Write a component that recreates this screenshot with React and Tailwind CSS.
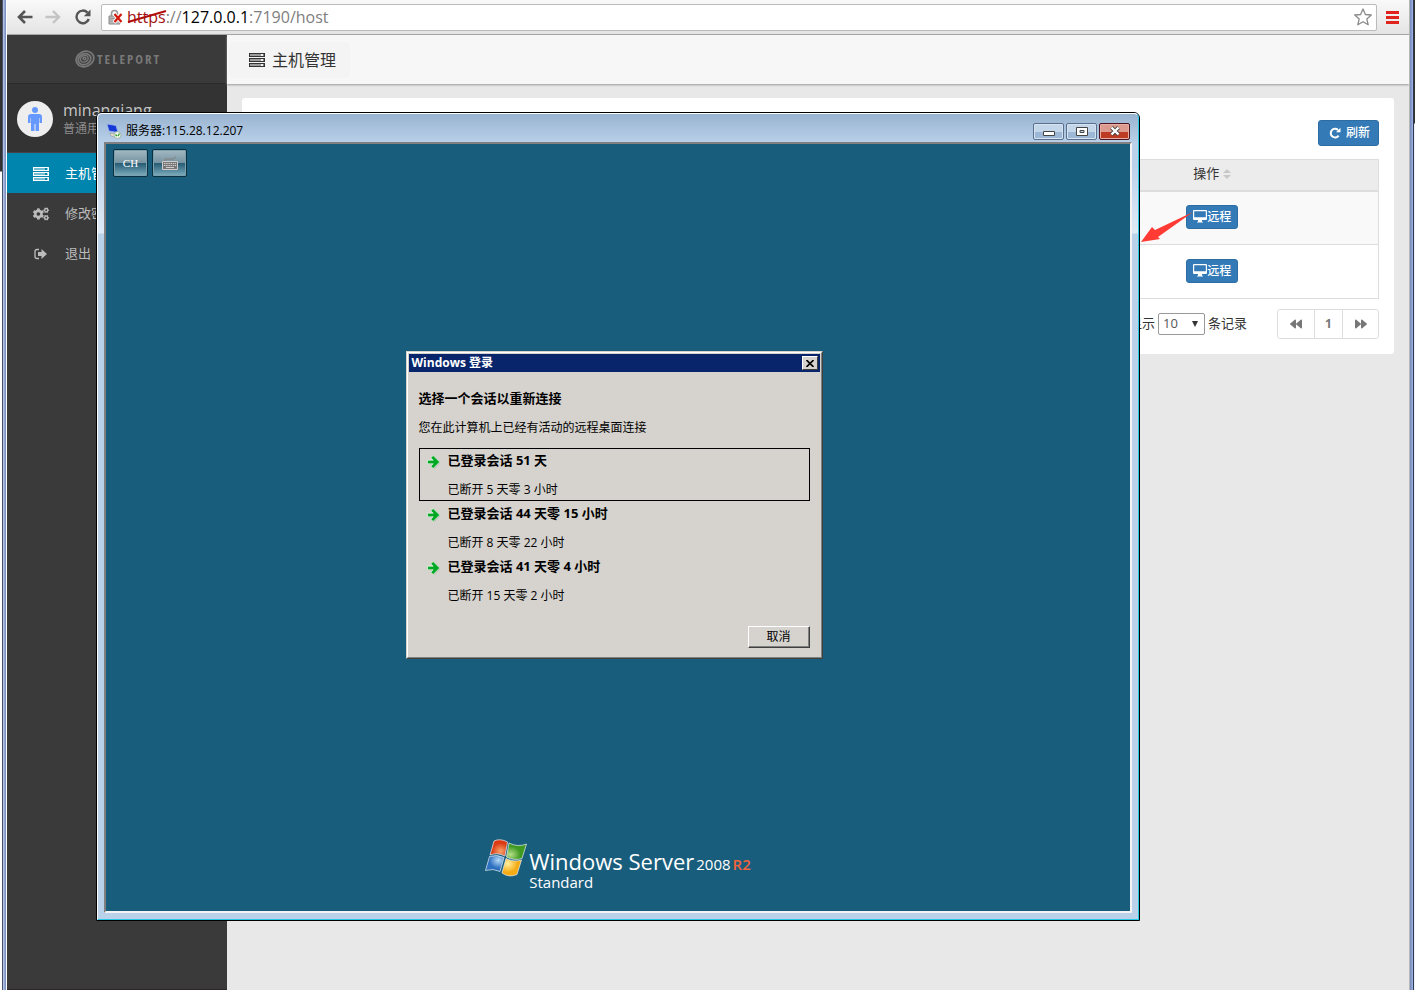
import { useState } from "react";
import { FaBackward, FaCogs, FaForward } from "react-icons/fa";

const menu = [
  { id: "host", name: "主机管理", Icon: ServerIcon },
  { id: "pwd", name: "修改密码", Icon: FaCogs },
  { id: "exit", name: "退出", Icon: ExitIcon },
];

const sessions = [
  { id: 1, title: "已登录会话 51 天", detail: "已断开 5 天零 3 小时" },
  { id: 2, title: "已登录会话 44 天零 15 小时", detail: "已断开 8 天零 22 小时" },
  { id: 3, title: "已登录会话 41 天零 4 小时", detail: "已断开 15 天零 2 小时" },
];

function ServerIcon({ className }) {
  return (
    <svg viewBox="0 0 16 14" className={className} fill="currentColor">
      {[0, 5, 10].map((y) => (
        <g key={y} transform={`translate(0 ${y})`}>
          <path fillRule="evenodd" d="M0 0h16v4H0zM1 1v2h14V1z" />
          <path d="M1 1h11v2H1z" opacity=".45" />
          <path d="M14 1h1v2h-1z" opacity=".6" />
        </g>
      ))}
    </svg>
  );
}

function ExitIcon({ className }) {
  return (
    <svg viewBox="0 0 16 14" className={className}>
      <path d="M6 2.500H4Q2 2.500 2 4.500v5q0 2 2 2h2" fill="none" stroke="currentColor" strokeWidth="1.3" />
      <path d="M8.500 2l5.500 5-5.500 5V9H5V5h3.500z" fill="currentColor" />
    </svg>
  );
}

function PersonIcon() {
  return (
    <svg viewBox="0 0 14 24" className="h-6 w-3.5" fill="currentColor">
      <circle cx="7" cy="3" r="3" />
      <path d="M3 7h8q3 0 3 3v6h-2.500v-5H11v13H7.500v-7h-1v7H3V11h-.5v5H0v-6q0-3 3-3z" />
    </svg>
  );
}

function DesktopIcon() {
  return (
    <svg viewBox="0 0 14 13" className="h-[13px] w-3.5" fill="currentColor">
      <path fillRule="evenodd" d="M1 0h12q1 0 1 1v8q0 1-1 1H9v1.500l1 .5v.5H4V12l1-.5V10H1q-1 0-1-1V1q0-1 1-1zM1.200 1.200v6h11.600v-6z" />
    </svg>
  );
}

function RefreshIcon() {
  return (
    <svg viewBox="0 0 12 12" className="h-3 w-3">
      <path d="M9.600 8.600A4.300 4.300 0 1 1 9 3" fill="none" stroke="currentColor" strokeWidth="2" />
      <path d="M11.500.7v4.600H7z" fill="currentColor" />
    </svg>
  );
}

function BrowserBar() {
  return (
    <div className="flex h-[35px] items-center border-b border-[#a5a5a5] bg-linear-to-b from-[#f9f9f9] to-[#e4e4e4] px-2.5">
      <button aria-label="back" className="text-[#555]">
        <svg viewBox="0 0 16 14" className="h-3.5 w-4" fill="none" stroke="currentColor" strokeWidth="2.6">
          <path d="M15.500 7H2M8 1L2 7l6 6" />
        </svg>
      </button>
      <button aria-label="forward" className="ml-3 text-[#c4c4c4]">
        <svg viewBox="0 0 16 14" className="h-3.5 w-4" fill="none" stroke="currentColor" strokeWidth="2.4">
          <path d="M.5 7H14M8 1l6 6-6 6" />
        </svg>
      </button>
      <button aria-label="reload" className="ml-3.5 text-[#555]">
        <svg viewBox="0 0 16 16" className="h-4 w-4">
          <path d="M13.800 10A6.300 6.300 0 1 1 12.500 3.600" fill="none" stroke="currentColor" strokeWidth="2.4" />
          <path d="M15.500.5v6.700H8.800z" fill="currentColor" />
        </svg>
      </button>
      <div className="ml-2.5 flex h-[27px] flex-1 items-center rounded-xs border border-[#bbb] bg-white pr-1 pl-1.5">
        <svg viewBox="0 0 16 16" className="h-4 w-4">
          <path d="M3.500 8V4.500a3 3 0 0 1 6 0V8" fill="none" stroke="#999" strokeWidth="1.6" />
          <path d="M1 7h11v8H1z" fill="#bbb" stroke="#888" />
          <path d="M2 9.500h9M2 12h9" stroke="#999" />
          <path d="M6 4.500l8 9M14 4.500l-8 9" stroke="#fff" strokeWidth="4" />
          <path d="M6.500 5l7 8M13.500 5l-7 8" stroke="#d4170c" strokeWidth="2.2" />
        </svg>
        <div className="ml-[3px] text-base leading-6 text-[#808080]">
          <span className="relative text-[#a01212]">
            https
            <svg viewBox="0 0 40 14" className="absolute top-1 left-0 h-3.5 w-10">
              <path d="M1 12L39 1" stroke="#b00d0d" strokeWidth="2" />
            </svg>
          </span>
          ://<span className="text-black">127.0.0.1</span>:7190/host
        </div>
        <svg viewBox="0 0 18 18" className="ml-auto h-[18px] w-[18px]" fill="none" stroke="#8a8a8a" strokeWidth="1.3">
          <path d="M9 1l2.400 5.500 5.900.5-4.500 3.900 1.400 5.900L9 13.700l-5.200 3.100 1.400-5.900L.7 7l5.900-.5z" strokeLinejoin="round" />
        </svg>
      </div>
      <button aria-label="menu" className="ml-[9px] flex w-[13px] flex-col gap-0.5">
        <span className="h-[3px] w-full bg-[#e0231d]" />
        <span className="h-[3px] w-full bg-[#e0231d]" />
        <span className="h-[3px] w-full bg-[#e0231d]" />
      </button>
    </div>
  );
}

function Sidebar() {
  return (
    <aside className="w-[220px] shrink-0 border-b border-[#2b2526] bg-[#3a3a3a]">
      <div className="flex h-[49px] items-center justify-center gap-0.5 border-b border-[#2b2b2b] text-[#787878]">
        <svg viewBox="0 0 20 18" className="h-[18px] w-5" fill="none" stroke="currentColor">
          <ellipse cx="10" cy="9" rx="9" ry="7.500" transform="rotate(-25 10 9)" strokeWidth="1.800" />
          <ellipse cx="9.500" cy="9" rx="6.500" ry="5.300" transform="rotate(-25 10 9)" strokeWidth="1.800" />
          <ellipse cx="9.500" cy="8.500" rx="4" ry="3.200" transform="rotate(-25 10 9)" strokeWidth="1.500" />
          <ellipse cx="9.500" cy="8.500" rx="1.500" ry="1.200" strokeWidth="1.500" />
        </svg>
        <span className="flex gap-0.5 font-['Open_Sans_Condensed','Open_Sans',sans-serif] text-[13px] leading-5 font-light">
          {"TELEPORT".split("").map((c, i) => (
            <span key={i}>{c}</span>
          ))}
        </span>
      </div>
      <div className="flex h-[68px] items-center gap-2.5 bg-[#333] pt-0.5 pl-2.5">
        <div className="flex h-9 w-9 items-center justify-center rounded-full bg-[#eee] text-[#6699ff]">
          <PersonIcon />
        </div>
        <div>
          <p className="text-base leading-5 text-[#c6c6c6]">minanqiang</p>
          <p className="text-xs leading-[18px] text-[#8c8c8c]">普通用户</p>
        </div>
      </div>
      <nav className="border-t border-[#474040]">
        {menu.map(({ id, name, Icon }) => (
          <a
            key={id}
            href="#"
            className={`flex h-10 items-center gap-4 pt-0.5 pl-[26px] text-[13px] ${
              id === "host" ? "bg-[#0086ae] text-white" : "text-[#bcbcbc]"
            }`}
          >
            <Icon className="h-4 w-4" />
            {name}
          </a>
        ))}
      </nav>
    </aside>
  );
}

function HostCard() {
  const [size, setSize] = useState("10");

  return (
    <section className="mx-[15px] mt-[14px] rounded-[3px] bg-white px-[15px] pt-[22px] pb-[15px]">
      <div className="flex justify-end">
        <button className="flex h-[26px] items-center gap-[5px] rounded-[3px] border border-[#2e6da4] bg-[#337ab7] px-2 pl-2.5 text-xs font-medium text-white">
          <RefreshIcon />
          刷新
        </button>
      </div>
      <table className="mt-[13px] w-full border-collapse border border-[#ddd] text-[13px] text-[#333]">
        <thead>
          <tr className="h-[31px] border-b-2 border-[#ddd] bg-[#ececec]">
            <th />
            <th className="w-[332px] pb-0.5 font-normal">
              <span className="flex items-center justify-center gap-1">
                操作
                <svg viewBox="0 0 8 10" className="h-2.5 w-2" fill="#c8c8c8">
                  <path d="M4 0l4 4H0zM4 10l4-4H0z" />
                </svg>
              </span>
            </th>
          </tr>
        </thead>
        <tbody>
          {[1, 2].map((n) => (
            <tr key={n} className="h-[54px] border-b border-[#ddd] odd:bg-[#f9f9f9]">
              <td />
              <td className="pb-0.5 text-center">
                <button className="inline-flex h-6 items-center rounded-[3px] border border-[#2e6da4] bg-[#337ab7] px-1.5 align-middle text-xs font-medium text-white">
                  <DesktopIcon />
                  远程
                </button>
              </td>
            </tr>
          ))}
        </tbody>
      </table>
      <div className="mt-2.5 flex items-center justify-end text-[13px] text-[#333]">
        <label htmlFor="size">每页显示</label>
        <span className="relative mx-[3px]">
          <select
            id="size"
            value={size}
            onChange={(e) => setSize(e.target.value)}
            className="block h-[22px] w-[47px] appearance-none rounded-xs border border-[#999] bg-white pl-1 text-[#555]"
          >
            <option>10</option>
            <option>25</option>
          </select>
          <svg viewBox="0 0 6 6" className="pointer-events-none absolute top-2 right-[7px] h-1.5 w-1.5">
            <path d="M0 0h6L3 6z" fill="#333" />
          </svg>
        </span>
        <label htmlFor="size">条记录</label>
        <div className="ml-[30px] flex h-[30px] divide-x divide-[#ddd] rounded-[3px] border border-[#ddd] text-xs font-bold text-[#777]">
          <button aria-label="first" className="flex w-[37px] items-center justify-center">
            <FaBackward className="h-3 w-3" />
          </button>
          <button className="w-7">1</button>
          <button aria-label="last" className="flex w-[35px] items-center justify-center">
            <FaForward className="h-3 w-3" />
          </button>
        </div>
      </div>
    </section>
  );
}

function LoginDialog() {
  return (
    <div className="w-[417px] border border-t-[#d6d3ce] border-r-[#404040] border-b-[#404040] border-l-[#d6d3ce] bg-[#d6d3ce] text-black">
      <div className="border border-t-white border-r-[#808080] border-b-[#808080] border-l-white p-px pb-[9px]">
        <div className="flex h-[18px] items-center justify-between bg-[#08246b] pr-0.5 pl-[3px] text-xs font-bold text-white">
          Windows 登录
          <button
            aria-label="close"
            className="flex h-3.5 w-4 items-center justify-center border border-t-white border-r-[#404040] border-b-[#404040] border-l-white bg-[#d6d3ce]"
          >
            <svg viewBox="0 0 8 7" className="h-[7px] w-2" stroke="#000" strokeWidth="1.600">
              <path d="M.5 0l7 7M7.500 0l-7 7" />
            </svg>
          </button>
        </div>
        <div className="px-2.5 pt-4">
          <h2 className="text-[13px] leading-5 font-bold">选择一个会话以重新连接</h2>
          <p className="mt-2.5 text-xs leading-5">您在此计算机上已经有活动的远程桌面连接</p>
          <ul className="mt-2.5">
            {sessions.map((s, i) => (
              <li
                key={s.id}
                className={`flex h-[53px] gap-[7px] border pl-[7px] ${i === 0 ? "border-black" : "border-transparent"}`}
              >
                <svg viewBox="0 0 14 14" className="mt-1.5 h-3.5 w-3.5">
                  <path d="M1.500 6h6L5 3.200l2.600-2L13.500 7.500l-6 6.300L5 11.800 7.500 9.500h-6z" fill="#a8a5a0" opacity=".6" />
                  <path d="M.5 5.200h5.700L3.800 2.700 6.200.6 12.700 7l-6.500 6.400-2.400-2.100 2.400-2.500H.5z" fill="#00a823" stroke="#e9fbe9" strokeWidth=".7" />
                </svg>
                <div>
                  <p className="mt-px text-[13px] leading-5 font-bold">{s.title}</p>
                  <p className="mt-2.5 text-xs leading-5">{s.detail}</p>
                </div>
              </li>
            ))}
          </ul>
          <div className="mt-[19px] flex justify-end">
            <button className="h-[22px] w-[62px] border border-t-white border-r-[#404040] border-b-[#404040] border-l-white text-xs shadow-[inset_-1px_-1px_#808080]">
              取消
            </button>
          </div>
        </div>
      </div>
    </div>
  );
}

function ServerLogo() {
  return (
    <div className="flex items-start text-white">
      <svg viewBox="0 0 42 38" className="h-[38px] w-[42px]">
        <defs>
          <radialGradient id="red" cx=".6" cy=".7"><stop offset="0" stopColor="#f8a36a" /><stop offset="1" stopColor="#dc3a12" /></radialGradient>
          <radialGradient id="green" cx=".2" cy=".7"><stop offset="0" stopColor="#b8e08a" /><stop offset="1" stopColor="#3f9a22" /></radialGradient>
          <radialGradient id="blue" cx=".7" cy=".3"><stop offset="0" stopColor="#b5dbf7" /><stop offset="1" stopColor="#2d6fc0" /></radialGradient>
          <radialGradient id="yellow" cx=".3" cy=".3"><stop offset="0" stopColor="#fff0a0" /><stop offset="1" stopColor="#f5ab13" /></radialGradient>
        </defs>
        <g stroke="#e8eef2" strokeWidth=".7">
          <path d="M9 2Q15-1 22.500 3L20 17Q12 13 5 16z" fill="url(#red)" />
          <path d="M24 4Q33 8.500 41.500 5L37 19.500Q29 22 21.500 18z" fill="url(#green)" />
          <path d="M4.500 17.500Q12 15 19 18.500L15 32.500Q8 29 .5 31.500z" fill="url(#blue)" />
          <path d="M21 19.500q8 4 15.500 1.500L32 35.500Q24 39 17 34z" fill="url(#yellow)" />
        </g>
      </svg>
      <div className="mt-2.5 ml-0.5">
        <p className="flex items-baseline gap-0.5">
          <span className="text-[22px] leading-6">Windows Server</span>
          <span className="text-[15px] leading-4">2008</span>
          <span className="text-[15px] leading-4 font-semibold text-[#f0643c]">R2</span>
        </p>
        <p className="text-[15px] leading-[18px]">Standard</p>
      </div>
    </div>
  );
}

function RemoteWindow() {
  return (
    <div className="absolute top-28 left-24 w-[1044px] rounded-t-md border border-black bg-[#bad1ea] text-black">
      <div className="rounded-t-[5px] border border-t-white border-r-[#28c8e8] border-b-[#28c8e8] border-l-white bg-[linear-gradient(to_bottom,#99b4d1_0,#bad1ea_30px,#bad1ea_50px,#e0eaf6_119px,#bad1ea_120px)] px-1.5 pb-1.5">
        <div className="flex h-7 items-center pt-1.5 pl-0.5 text-xs">
          <svg viewBox="0 0 16 16" className="h-4 w-4">
            <path d="M1 1l9 1.500 2 7L3 8z" fill="#1437d6" stroke="#9db4e8" strokeWidth=".8" />
            <path d="M4 10l5 1 1 3-5-1z" fill="#e5e2d2" stroke="#888" strokeWidth=".5" />
            <circle cx="11.500" cy="12" r="3.500" fill="#e9f3e5" stroke="#8a9a86" strokeWidth=".6" />
            <path d="M9.500 11.500l1.500 1.500M13.500 10.500L12 13" stroke="#2e9c2e" strokeWidth="1.200" />
          </svg>
          <span className="ml-1">服务器:115.28.12.207</span>
          <div className="mr-0.5 ml-auto flex gap-0.5">
            <button aria-label="minimize" className="flex h-[17px] w-[31px] items-center justify-center rounded-xs border border-[#5a6f8c] bg-linear-to-b from-[#c3d6ea] from-50% to-[#9db8d6] to-50% shadow-[inset_0_0_0_1px_#d5e3f2]">
              <svg viewBox="0 0 12 5" className="mt-1 h-[5px] w-3"><path d="M.5.5h11v4H.5z" fill="#fff" stroke="#444" /></svg>
            </button>
            <button aria-label="restore" className="flex h-[17px] w-[31px] items-center justify-center rounded-xs border border-[#5a6f8c] bg-linear-to-b from-[#c3d6ea] from-50% to-[#9db8d6] to-50% shadow-[inset_0_0_0_1px_#d5e3f2]">
              <svg viewBox="0 0 12 9" className="h-[9px] w-3"><path fillRule="evenodd" d="M.5.5h11v8H.5zM4 3.500v2h4v-2z" fill="#fff" stroke="#444" /></svg>
            </button>
            <button aria-label="close" className="flex h-[17px] w-[31px] items-center justify-center rounded-xs border border-[#4d1420] bg-linear-to-b from-[#dd9a8e] from-50% to-[#bd3b22] to-50% shadow-[inset_0_0_0_1px_#e6aea4]">
              <svg viewBox="0 0 12 10" className="h-2.5 w-3">
                <path d="M2.500 1.500l7 7M9.500 1.500l-7 7" stroke="#444" strokeWidth="4" />
                <path d="M2.500 1.500l7 7M9.500 1.500l-7 7" stroke="#fff" strokeWidth="2.400" />
              </svg>
            </button>
          </div>
        </div>
        <div className="border-2 border-t-[#808080] border-r-[#f4f4f4] border-b-[#f4f4f4] border-l-[#808080] bg-[#195d7d] px-[7px] pt-[5px] pb-5">
          <div className="flex gap-1">
            <button className="flex h-7 w-[35px] items-center justify-center rounded-xs border border-[#0b3040] bg-[linear-gradient(to_bottom,#a3b9c3,#7593a0_50%,#275c74_52%,#7fb0c0)] font-['Liberation_Serif',serif] text-[11px] text-white shadow-[inset_0_0_0_1px_#7ba0ae]">
              CH
            </button>
            <button aria-label="keyboard" className="flex h-7 w-[35px] items-center justify-center rounded-xs border border-[#0b3040] bg-[linear-gradient(to_bottom,#a3b9c3,#7593a0_50%,#275c74_52%,#7fb0c0)] shadow-[inset_0_0_0_1px_#7ba0ae]">
              <svg viewBox="0 0 16 14" className="h-3.5 w-4" fill="none" stroke="#d0cccc">
                <path d="M3 5V3h8l3-2.500" stroke="#85807f" />
                <path d="M.5 5.500h15v8H.5z" fill="#777" />
                <path d="M2 7.500h12M2 9.500h12" strokeDasharray="1.500 .7" />
                <path d="M4 11.500h8" />
              </svg>
            </button>
          </div>
          <div className="mt-[174px] mr-2 flex justify-center">
            <LoginDialog />
          </div>
          <div className="mt-[180px] flex justify-center">
            <ServerLogo />
          </div>
        </div>
      </div>
    </div>
  );
}

export default function App() {
  return (
    <div className="relative flex min-h-screen overflow-hidden bg-[#e8e8e8] font-['Open_Sans','Noto_Sans_CJK_SC',sans-serif]">
      <div className="w-0.5 shrink-0 bg-linear-to-b from-[#303234] from-[171px] to-white to-[172px]" />
      <div className="w-[5px] shrink-0 border-r border-l border-r-white border-l-[#4a5268] bg-linear-to-r from-[#b9cbee] to-[#7487b8]" />

      <div className="flex min-w-0 flex-1 flex-col">
        <BrowserBar />
        <div className="flex flex-1">
          <Sidebar />
          <main className="min-w-0 flex-1">
            <header className="flex h-[49px] items-center bg-[#f7f7f7] pl-0.5 shadow-[0_1px_2px_#999]">
              <h1 className="flex h-9 items-center gap-[7px] rounded-sm bg-[#f4f4f4] px-3.5 pl-5 text-base text-[#333]">
                <ServerIcon className="h-3.5 w-4" />
                主机管理
              </h1>
            </header>
            <HostCard />
          </main>
        </div>
      </div>

      <div className="w-[5px] shrink-0 border-r border-l border-r-[#30384c] border-l-[#b8b8b8] bg-linear-to-r from-[#7487b8] to-[#9fb5e6]" />
      <div className="w-px shrink-0 bg-linear-to-b from-[#303234] from-[123px] to-[#eef2fa] to-[124px]" />

      <RemoteWindow />

      {/* pointer from the remote button to the session window */}
      <svg viewBox="0 0 54 32" className="absolute top-[211px] left-[1140px] h-8 w-[54px]">
        <path d="M1 31L12 16l3 3L53 1 18 26l2 2z" fill="#ff3b34" />
      </svg>
    </div>
  );
}
